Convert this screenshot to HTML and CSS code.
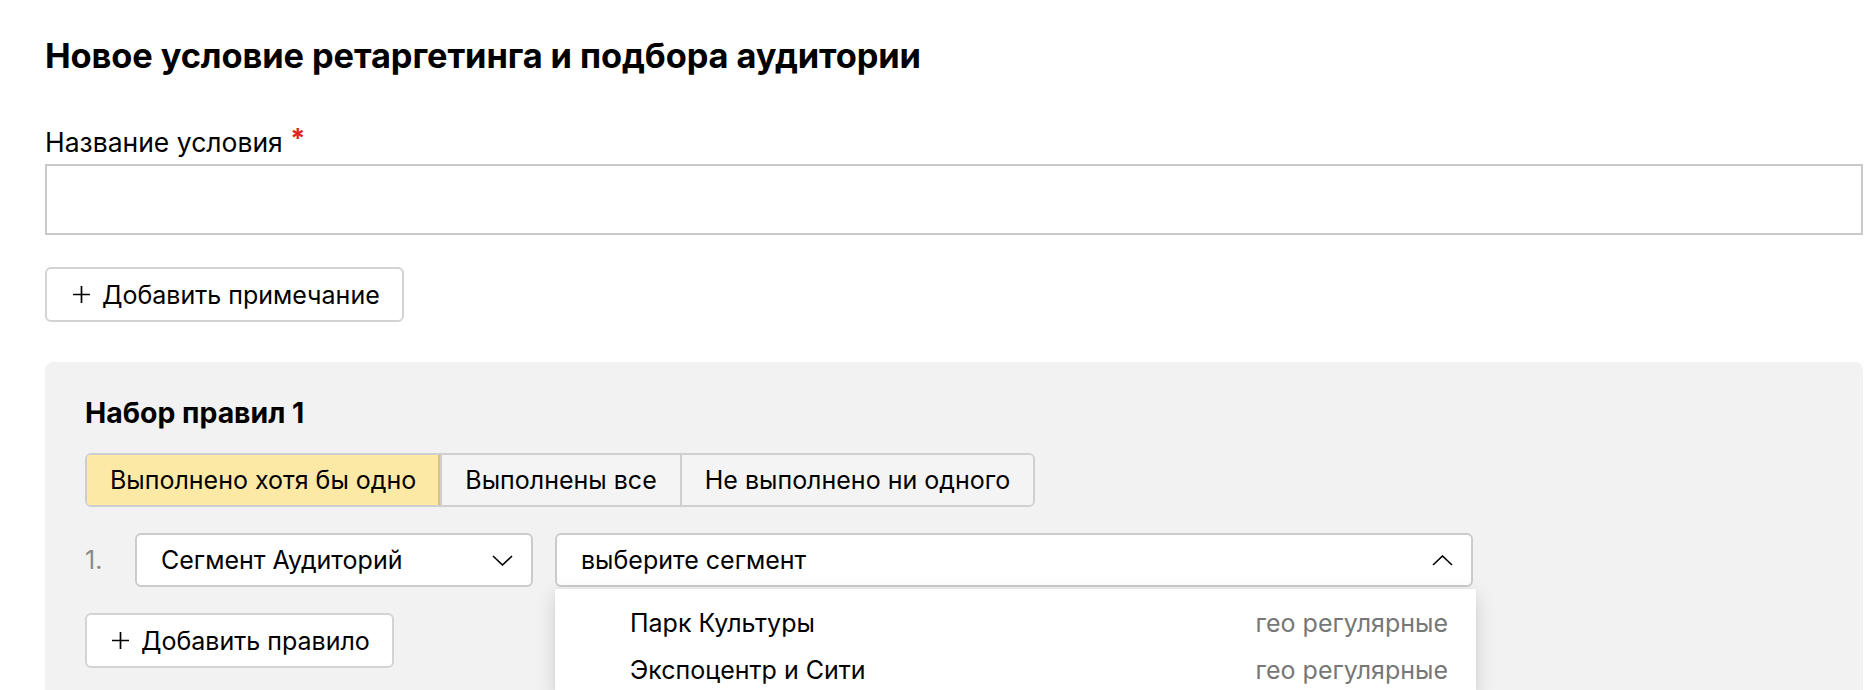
FILE: index.html
```html
<!DOCTYPE html>
<html lang="ru">
<head>
    <meta charset="UTF-8">
    <meta name="viewport" content="width=device-width, initial-scale=1.0">
    <title>Новое условие ретаргетинга</title>
    <link rel="stylesheet" href="styles.css">
</head>
<body>
    <div class="page">
        <h1 class="title">Новое условие ретаргетинга и подбора аудитории</h1>

        <label class="field-label" for="cond-name">Название условия <span class="req">*</span></label>
        <input class="text-input" id="cond-name" type="text">

        <button class="btn btn-note">
            <svg class="plus" width="19" height="19" viewBox="0 0 19 19"><path d="M9.5 1v17M1 9.5h17" stroke="#000" stroke-width="1.7" fill="none"/></svg>
            Добавить примечание
        </button>

        <div class="ruleset">
            <h2 class="ruleset-title">Набор правил 1</h2>

            <div class="segmented">
                <div class="seg seg-active">Выполнено хотя бы одно</div>
                <div class="seg">Выполнены все</div>
                <div class="seg">Не выполнено ни одного</div>
            </div>

            <div class="rule-row">
                <span class="rule-num">1.</span>
                <div class="select select-type">
                    <span>Сегмент Аудиторий</span>
                    <svg width="21" height="11" viewBox="0 0 21 11"><path d="M1 1l9.5 9 9.5-9" stroke="#000" stroke-width="1.6" fill="none"/></svg>
                </div>
                <div class="select-wrap">
                    <div class="select select-segment">
                        <span>выберите сегмент</span>
                        <svg width="21" height="11" viewBox="0 0 21 11"><path d="M1 10l9.5-9 9.5 9" stroke="#000" stroke-width="1.6" fill="none"/></svg>
                    </div>
                    <ul class="dropdown">
                        <li><span>Парк Культуры</span><span class="kind">гео регулярные</span></li>
                        <li><span>Экспоцентр и Сити</span><span class="kind">гео регулярные</span></li>
                    </ul>
                </div>
            </div>

            <button class="btn btn-rule">
                <svg class="plus" width="19" height="19" viewBox="0 0 19 19"><path d="M9.5 1v17M1 9.5h17" stroke="#000" stroke-width="1.7" fill="none"/></svg>
                Добавить правило
            </button>
        </div>
    </div>
</body>
</html>
```

FILE: styles.css
```css
* {
    margin: 0;
    padding: 0;
    box-sizing: border-box;
}

html, body {
    height: 690px;
    overflow: hidden;
}

body {
    font-family: Inter, 'Noto Sans', sans-serif;
    font-size: 25px;
    color: #000;
    background: #fff;
}

.page {
    padding: 36px 7px 0 45px;
}

.title {
    font-size: 34.4px;
    font-weight: 700;
    line-height: 40px;
    letter-spacing: -0.1px;
}

.field-label {
    display: block;
    margin-top: 50px;
    font-size: 26.5px;
    line-height: 32px;
}

.req {
    color: #e52222;
    font-size: 27px;
    font-weight: 700;
    position: relative;
    top: -4px;
}

.text-input {
    display: block;
    width: 100%;
    height: 71px;
    margin-top: 5px;
    border: 2px solid #c9c9c9;
    background: #fff;
    font: inherit;
    outline: none;
}

.btn {
    display: flex;
    align-items: center;
    height: 55px;
    padding: 0 22px 0 25px;
    border: 2px solid #d3d3d3;
    border-radius: 6px;
    background: #fff;
    font: inherit;
    color: #000;
}

.btn .plus {
    margin-right: 11px;
}

.btn-note {
    margin-top: 32px;
}

.ruleset {
    margin-top: 40px;
    height: 400px;
    padding: 33px 40px 0;
    background: #f2f2f2;
    border-radius: 8px;
}

.ruleset-title {
    font-size: 28.4px;
    font-weight: 700;
    line-height: 36px;
}

.segmented {
    display: inline-flex;
    margin-top: 22px;
    height: 54px;
    border: 2px solid #cfcfcf;
    border-radius: 6px;
    background: #fff;
    overflow: hidden;
}

.seg {
    display: flex;
    align-items: center;
    padding: 0 23px;
    border-left: 2px solid #cfcfcf;
    background: #f4f4f4;
}

.seg:first-child {
    border-left: none;
}

.seg-active {
    background: #fde9a6;
    box-shadow: inset 0 0 0 2px #d8c27f;
    margin: -2px 0 -2px -2px;
    padding: 0 24px 0 25px;
}

.rule-row {
    display: flex;
    align-items: center;
    margin-top: 26px;
}

.rule-num {
    width: 50px;
    color: #8a8a8a;
}

.select {
    display: flex;
    align-items: center;
    justify-content: space-between;
    height: 54px;
    padding: 0 18px 0 24px;
    background: #fff;
    border: 2px solid #cbcbcb;
    border-radius: 6px;
}

.select-type {
    width: 398px;
}

.select-wrap {
    position: relative;
    margin-left: 22px;
}

.select-segment {
    width: 918px;
    padding-left: 24px;
}

.dropdown {
    position: absolute;
    top: 56px;
    left: 0;
    width: 921px;
    padding-top: 10px;
    list-style: none;
    background: #fff;
    box-shadow: 0 6px 20px rgba(0, 0, 0, 0.14), 0 0 3px rgba(0, 0, 0, 0.06);
    z-index: 2;
}

.dropdown li {
    display: flex;
    justify-content: space-between;
    align-items: center;
    height: 47px;
    padding: 0 28px 0 75px;
}

.kind {
    color: #777;
}

.btn-rule {
    margin-top: 26px;
    padding-left: 24px;
}
```
